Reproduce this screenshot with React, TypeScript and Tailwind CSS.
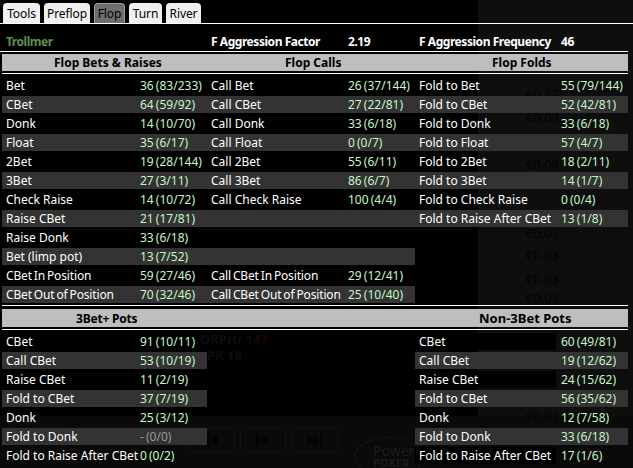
import type { ReactNode } from "react";

const font = { fontFamily: '"Noto Sans", Tahoma, sans-serif' };

type Cell = [string, string, string] | null;

const top: [Cell, Cell, Cell][] = [
  [["Bet", "36", "(83/233)"], ["Call Bet", "26", "(37/144)"], ["Fold to Bet", "55", "(79/144)"]],
  [["CBet", "64", "(59/92)"], ["Call CBet", "27", "(22/81)"], ["Fold to CBet", "52", "(42/81)"]],
  [["Donk", "14", "(10/70)"], ["Call Donk", "33", "(6/18)"], ["Fold to Donk", "33", "(6/18)"]],
  [["Float", "35", "(6/17)"], ["Call Float", "0", "(0/7)"], ["Fold to Float", "57", "(4/7)"]],
  [["2Bet", "19", "(28/144)"], ["Call 2Bet", "55", "(6/11)"], ["Fold to 2Bet", "18", "(2/11)"]],
  [["3Bet", "27", "(3/11)"], ["Call 3Bet", "86", "(6/7)"], ["Fold to 3Bet", "14", "(1/7)"]],
  [["Check Raise", "14", "(10/72)"], ["Call Check Raise", "100", "(4/4)"], ["Fold to Check Raise", "0", "(0/4)"]],
  [["Raise CBet", "21", "(17/81)"], null, ["Fold to Raise After CBet", "13", "(1/8)"]],
  [["Raise Donk", "33", "(6/18)"], null, null],
  [["Bet (limp pot)", "13", "(7/52)"], null, null],
  [["CBet In Position", "59", "(27/46)"], ["Call CBet In Position", "29", "(12/41)"], null],
  [["CBet Out of Position", "70", "(32/46)"], ["Call CBet Out of Position", "25", "(10/40)"], null],
];
const stripeWidth: Record<number, string> = {
  1: "w-[626px]", 3: "w-[626px]", 5: "w-[626px]", 7: "w-[626px]", 9: "w-[413px]", 11: "w-[413px]",
};

const left: Cell[] = [
  ["CBet", "91", "(10/11)"], ["Call CBet", "53", "(10/19)"], ["Raise CBet", "11", "(2/19)"],
  ["Fold to CBet", "37", "(7/19)"], ["Donk", "25", "(3/12)"], ["Fold to Donk", "-", "(0/0)"],
  ["Fold to Raise After CBet", "0", "(0/2)"],
];
const right: Cell[] = [
  ["CBet", "60", "(49/81)"], ["Call CBet", "19", "(12/62)"], ["Raise CBet", "24", "(15/62)"],
  ["Fold to CBet", "56", "(35/62)"], ["Donk", "12", "(7/58)"], ["Fold to Donk", "33", "(6/18)"],
  ["Fold to Raise After CBet", "17", "(1/6)"],
];

const tight = ["CBet In Position", "CBet Out of Position", "Call CBet In Position", "Call CBet Out of Position"];

function Stat({ cell, labelW }: { cell: Cell; labelW: string }) {
  if (!cell) return <div className={labelW} />;
  return (
    <>
      <span
        className={`shrink-0 whitespace-nowrap pl-1 text-white ${labelW} ${
          tight.includes(cell[0]) ? "tracking-[-0.15px] [word-spacing:-1px]" : ""
        }`}
      >
        {cell[0]}
      </span>
      <span
        className={`flex-1 whitespace-nowrap [word-spacing:-1px] ${
          cell[1] === "-" ? "text-[#9a9a9a]" : "text-[#c8f5c8]"
        }`}
      >
        {cell[1]} {cell[2]}
      </span>
    </>
  );
}

function Tab({ label, w, active }: { label: string; w: string; active?: boolean }) {
  return (
    <div
      className={`flex h-[20px] items-center justify-center rounded-t-[4px] tracking-[-0.1px] text-black ${w} ${
        active ? "border border-b-0 border-[#999] bg-[#6e6e6e]" : "bg-[#f0f0f0]"
      }`}
    >
      {label}
    </div>
  );
}

function Ghost({ children, className }: { children: ReactNode; className: string }) {
  return <div className={`absolute whitespace-nowrap ${className}`}>{children}</div>;
}

function GhostButton({ className, d }: { className: string; d: string }) {
  return (
    <div className={`absolute top-[428px] flex h-[24px] items-center justify-center rounded-[5px] border border-[#131313] ${className}`}>
      <svg width="16" height="14" viewBox="0 0 16 14" fill="#030303">
        <path d={d} />
      </svg>
    </div>
  );
}

const euros: [string, string][] = [
  ["€0.12", "top-[89px]"],
  ["€0.09", "top-[112px]"],
  ["€0.08", "top-[159px]"],
  ["€0.03", "top-[228px]"],
  ["€0.03", "top-[250px]"],
  ["€0.03", "top-[274px]"],
  ["€0.03", "top-[293px]"],
  ["€0.01", "top-[411px]"],
];

export default function App() {
  return (
    <div className="relative h-[468px] w-[633px] overflow-hidden bg-black text-[12px] leading-[17px]" style={font}>
      <div className="absolute inset-y-0 right-0 w-[155px] bg-[#0e0e0e]" />
      <div className="absolute inset-x-0 bottom-0 h-[52px] bg-[#0a0a0a]" />
      {euros.map(([t, pos], i) => (
        <Ghost key={i} className={`right-[74px] text-[13px] leading-[11px] text-[#030303] ${pos}`}>{t}</Ghost>
      ))}
      <Ghost className="left-[200px] top-[332px] text-[13px] font-bold leading-[14px] text-[#0e0e0e]">
        ORPH/ <span className="text-[#1a0505]">147</span>
      </Ghost>
      <Ghost className="left-[207px] top-[348px] text-[13px] font-bold leading-[14px] text-[#0e0e0e]">PR 18</Ghost>
      <GhostButton className="left-[190px] w-[45px]" d="M2 1h2v12H2zM13 1v12L5 7z" />
      <GhostButton className="left-[240px] w-[46px]" d="M1 1l7 6-7 6zM8 1l7 6-7 6z" />
      <GhostButton className="left-[292px] w-[46px]" d="M0 1l6 6-6 6zM6 1l6 6-6 6zM13 1h2v12h-2z" />
      <div className="absolute left-[354px] top-[437px] h-[40px] w-[70px] rounded-[50%] border border-[#161616]" />
      <Ghost className="left-[373px] top-[445px] text-[14px] leading-[11px] text-[#1c1c1c]">Power</Ghost>
      <Ghost className="left-[373px] top-[457px] text-[11px] font-bold leading-[11px] text-[#1c1c1c]">POKER</Ghost>

      <div className="relative">
        <div className="flex h-[23px] items-end gap-[4px] pl-[3px]">
          <Tab label="Tools" w="w-[37px]" />
          <Tab label="Preflop" w="w-[46px]" />
          <Tab label="Flop" w="w-[31px]" active />
          <Tab label="Turn" w="w-[33px]" />
          <Tab label="River" w="w-[35px]" />
        </div>
        <div className="h-px bg-white" />
        <div className="flex h-[27px] items-center pt-[7px] font-bold tracking-[-0.45px]">
          <span className="ml-[6px] w-[205px] text-[#5f8f4f]">Trollmer</span>
          <span className="w-[137px] text-white">F Aggression Factor</span>
          <span className="w-[71px] text-white">2.19</span>
          <span className="w-[142px] text-white">F Aggression Frequency</span>
          <span className="text-white">46</span>
        </div>
        <div className="h-px w-[628px] bg-white" />
        <div className="ml-[2px] mt-[2px] flex h-[17px] w-[626px] bg-[#bebebe] font-bold text-black">
          <div className="w-[207px] pl-[52px]">Flop Bets &amp; Raises</div>
          <div className="w-[207px] pl-[76px]">Flop Calls</div>
          <div className="pl-[76px]">Flop Folds</div>
        </div>
        <div className="ml-[2px] mt-[2px] h-px w-[626px] bg-white" />
        <div className="ml-[2px] mt-[3px] flex w-[626px] flex-col gap-[2px]">
          {top.map((row, i) => (
            <div key={i} className={`flex h-[17px] items-center ${stripeWidth[i] ? `${stripeWidth[i]} bg-[#333333]` : "w-[626px]"}`}>
              <div className="flex w-[205px] shrink-0"><Stat cell={row[0]} labelW="w-[138px]" /></div>
              <div className="flex w-[208px] shrink-0"><Stat cell={row[1]} labelW="w-[141px]" /></div>
              {i < 9 && <div className="flex w-[213px] shrink-0"><Stat cell={row[2]} labelW="w-[146px]" /></div>}
            </div>
          ))}
        </div>
        <div className="ml-[2px] mt-[2px] h-px w-[626px] bg-white" />
        <div className="ml-[2px] mt-[3px] flex h-[18px] w-[626px] items-center bg-[#bebebe] font-bold text-black">
          <div className="w-[413px] pl-[74px] tracking-[-0.2px]">3Bet+ Pots</div>
          <div className="pl-[64px] text-[13px]">Non-3Bet Pots</div>
        </div>
        <div className="ml-[2px] mt-[2px] h-px w-[626px] bg-white" />
        <div className="mx-[2px] mt-[3px] flex w-[626px] justify-between">
          <div className="flex w-[205px] flex-col gap-[2px]">
            {left.map((c, i) => (
              <div key={i} className={`flex h-[17px] items-center ${i % 2 ? "bg-[#333333]" : ""}`}>
                <Stat cell={c} labelW="w-[138px]" />
              </div>
            ))}
          </div>
          <div className="flex w-[213px] flex-col gap-[2px]">
            {right.map((c, i) => (
              <div key={i} className={`flex h-[17px] items-center ${i % 2 ? "bg-[#333333]" : ""}`}>
                <Stat
                  cell={c}
                  labelW={i % 2 === 1 || i === 4 ? "w-[146px]" : "mr-[5px] w-[141px] bg-black"}
                />
              </div>
            ))}
          </div>
        </div>
      </div>
    </div>
  );
}
